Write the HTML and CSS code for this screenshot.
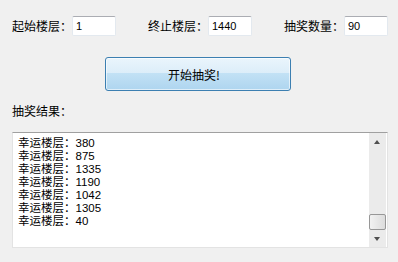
FILE: index.html
```html
<!DOCTYPE html>
<html lang="zh">
<head>
<meta charset="utf-8">
<link rel="stylesheet" href="styles.css">
</head>
<body>
<div class="window">
  <div class="params">
    <div class="field"><span class="label">起始楼层：</span><div class="input">1</div></div>
    <div class="field"><span class="label">终止楼层：</span><div class="input">1440</div></div>
    <div class="field"><span class="label">抽奖数量：</span><div class="input">90</div></div>
  </div>
  <div class="btn-row"><button class="start">开始抽奖!</button></div>
  <div class="result-label">抽奖结果：</div>
  <div class="result-box">
    <div class="lines">
      <div class="line">幸运楼层：380</div>
      <div class="line">幸运楼层：875</div>
      <div class="line">幸运楼层：1335</div>
      <div class="line">幸运楼层：1190</div>
      <div class="line">幸运楼层：1042</div>
      <div class="line">幸运楼层：1305</div>
      <div class="line">幸运楼层：40</div>
    </div>
    <div class="scrollbar">
      <div class="arrow up"></div>
      <div class="track"><div class="thumb"></div></div>
      <div class="arrow down"></div>
    </div>
  </div>
</div>
</body>
</html>
```
FILE: styles.css
```css
html, body {
  margin: 0;
  padding: 0;
  background: #f0f0f0;
}
body {
  width: 398px;
  height: 262px;
  overflow: hidden;
  font-family: "Noto Sans CJK SC", "Liberation Sans", sans-serif;
  font-size: 12px;
  color: #000;
}
.window {
  padding: 16px 10px 0 12px;
}
.params {
  display: flex;
  gap: 32px;
}
.field {
  display: flex;
  align-items: center;
  height: 20px;
}
.label {
  width: 60px;
  line-height: 20px;
}
.input {
  box-sizing: border-box;
  width: 44px;
  height: 20px;
  background: #fff;
  border: 1px solid #e3e9ef;
  border-top-color: #abadb3;
  border-radius: 2px;
  font-family: "Liberation Sans", sans-serif;
  font-size: 11px;
  line-height: 18px;
  padding-left: 3px;
}
.btn-row {
  margin-top: 21px;
  padding-left: 93px;
}
.start {
  box-sizing: border-box;
  width: 186px;
  height: 34px;
  margin: 0;
  border: 1px solid #3c7fb1;
  border-radius: 3px;
  box-shadow: inset 0 0 0 1px rgba(255, 255, 255, 0.6);
  background: linear-gradient(#eaf5fc 0%, #dcedf9 47%, #c2e1f5 48%, #aed5ef 100%);
  font-family: "Noto Sans CJK SC", sans-serif;
  font-size: 12px;
  color: #000;
  padding: 0 8px 0 0;
}
.result-label {
  margin-top: 12px;
  line-height: 16px;
}
.result-box {
  box-sizing: border-box;
  margin-top: 13px;
  width: 376px;
  height: 116px;
  background: #fff;
  border: 1px solid #e3e3e3;
  border-top-color: #a0a0a0;
  display: flex;
}
.lines {
  flex: 1;
  padding: 4px 0 0 5px;
  font-family: "Liberation Sans", "Noto Sans CJK SC", sans-serif;
  font-size: 11.5px;
}
.line {
  height: 13px;
  line-height: 13px;
}
.scrollbar {
  width: 17px;
  margin: 0 1px 0 0;
  background: #ebebeb;
  display: flex;
  flex-direction: column;
}
.arrow {
  height: 17px;
  position: relative;
}
.arrow::after {
  content: "";
  position: absolute;
  left: 5px;
  width: 0;
  height: 0;
  border-left: 3.5px solid transparent;
  border-right: 3.5px solid transparent;
}
.arrow.up::after {
  top: 7px;
  border-bottom: 4px solid #505050;
}
.arrow.down::after {
  top: 7px;
  border-top: 4px solid #505050;
}
.track {
  flex: 1;
  display: flex;
  flex-direction: column;
  justify-content: flex-end;
}
.thumb {
  box-sizing: border-box;
  height: 16px;
  border: 1px solid #979797;
  border-radius: 2px;
  background: linear-gradient(90deg, #f2f2f2, #dcdcdc);
}
```
